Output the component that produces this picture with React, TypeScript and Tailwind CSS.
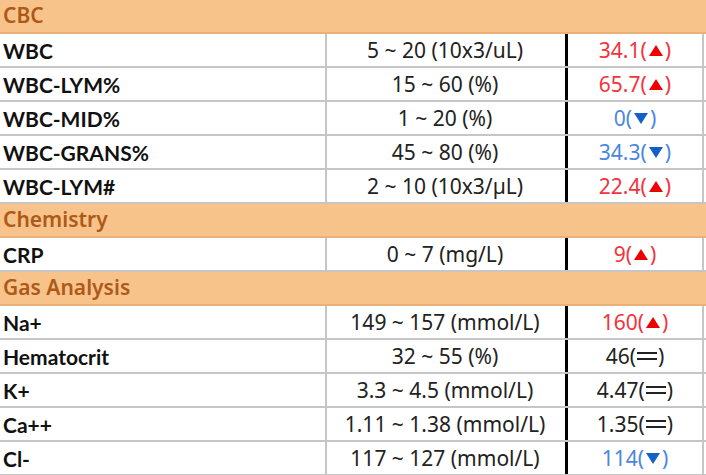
import React from "react";

type Flag = "up" | "down" | "eq";

type Row = { name: string; range: string; value: string; flag: Flag };

type Section = { title: string; rows: Row[] };

const sections: Section[] = [
    {
        title: "CBC",
        rows: [
            { name: "WBC", range: "5 ~ 20 (10x3/uL)", value: "34.1", flag: "up" },
            { name: "WBC-LYM%", range: "15 ~ 60 (%)", value: "65.7", flag: "up" },
            { name: "WBC-MID%", range: "1 ~ 20 (%)", value: "0", flag: "down" },
            { name: "WBC-GRANS%", range: "45 ~ 80 (%)", value: "34.3", flag: "down" },
            { name: "WBC-LYM#", range: "2 ~ 10 (10x3/µL)", value: "22.4", flag: "up" },
        ],
    },
    {
        title: "Chemistry",
        rows: [{ name: "CRP", range: "0 ~ 7 (mg/L)", value: "9", flag: "up" }],
    },
    {
        title: "Gas Analysis",
        rows: [
            { name: "Na+", range: "149 ~ 157 (mmol/L)", value: "160", flag: "up" },
            { name: "Hematocrit", range: "32 ~ 55 (%)", value: "46", flag: "eq" },
            { name: "K+", range: "3.3 ~ 4.5 (mmol/L)", value: "4.47", flag: "eq" },
            { name: "Ca++", range: "1.11 ~ 1.38 (mmol/L)", value: "1.35", flag: "eq" },
            { name: "Cl-", range: "117 ~ 127 (mmol/L)", value: "114", flag: "down" },
        ],
    },
];

// filled triangle, same size as the glyph in the original report
function Tri({ down, color }: { down?: boolean; color: string }) {
    return (
        <svg width="16" height="13" viewBox="0 0 16 13" className="inline-block mx-[1px] -mt-[2px] align-middle">
            <path d={down ? "M1 1h14L8 12z" : "M8 1l7 11H1z"} fill={color} />
        </svg>
    );
}

function Value({ value, flag }: { value: string; flag: Flag }) {
    if (flag === "up") {
        return (
            <span className="text-[#f5323c]">
                {value}(<Tri color="#ee0000" />)
            </span>
        );
    }
    if (flag === "down") {
        return (
            <span className="text-[#4a86e0]">
                {value}(<Tri down color="#1560c8" />)
            </span>
        );
    }
    return (
        <span className="text-[#222]">
            {value}(<span className="inline-flex flex-col gap-[4px] w-[20px] mx-[1px] align-middle -mt-[3px]">
                <span className="h-[2px] bg-[#222]" />
                <span className="h-[2px] bg-[#222]" />
            </span>)
        </span>
    );
}

export default function App() {
    return (
        <div
            className="w-[706px] h-[475px] overflow-hidden bg-white"
            style={{ fontFamily: '"Noto Sans", "Open Sans", sans-serif' }}
        >
            {sections.map((s) => (
                <div key={s.title}>
                    <div className="h-[34px] bg-[#f8c38b] flex items-center px-[3px] text-[21px] font-semibold text-[#ad5a19] border-b-2 border-[#e9b27a]">
                        {s.title}
                    </div>
                    {s.rows.map((r) => (
                        <div key={r.name} className="h-[34px] flex border-b-2 border-[#c6c6c6] text-[21px] leading-none">
                            <div className="w-[327px] shrink-0 flex items-center px-[3px] font-bold text-[21px] text-[#111] border-r-2 border-[#c6c6c6] font-['Lato',sans-serif]">
                                {r.name}
                            </div>
                            <div className="w-[241px] shrink-0 flex items-center justify-center text-[#222] border-r-[3px] border-black pr-[2px]">
                                {r.range}
                            </div>
                            <div className="w-[136px] shrink-0 flex items-center justify-center border-r-2 border-[#c6c6c6]">
                                <Value value={r.value} flag={r.flag} />
                            </div>
                        </div>
                    ))}
                </div>
            ))}
        </div>
    );
}
